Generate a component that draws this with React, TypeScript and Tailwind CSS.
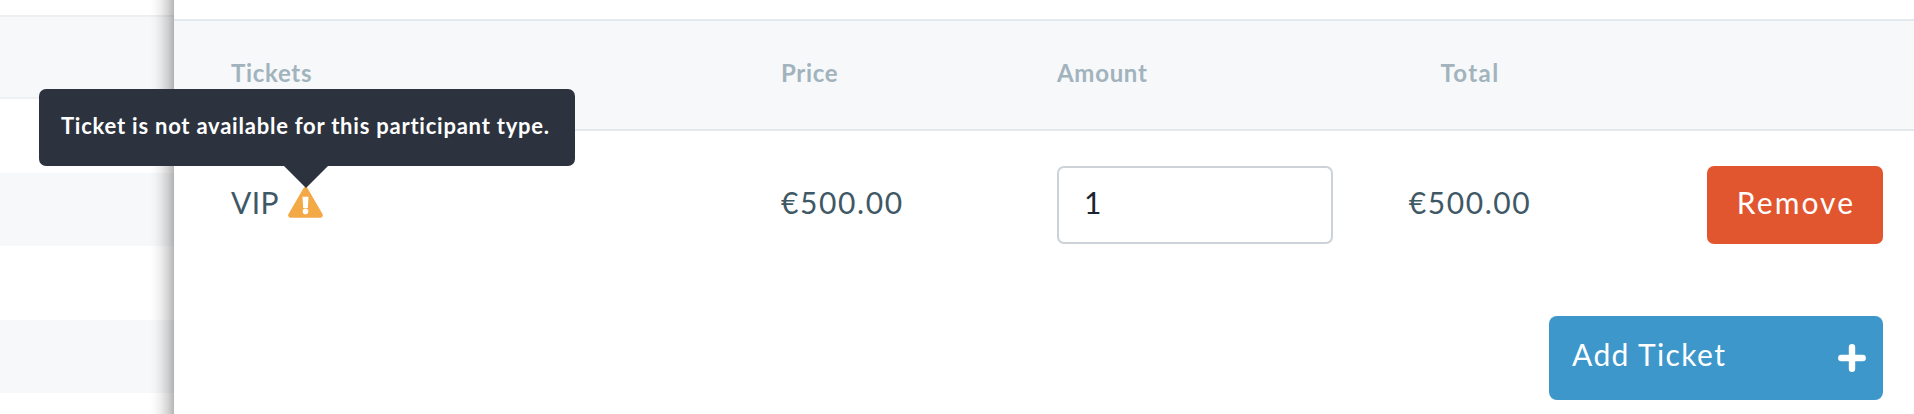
import { useState } from 'react';

function WarningIcon() {
  return (
    <svg viewBox="0 0 35 31" className="w-[35px] h-[31px]" aria-hidden="true">
      <path
        d="M15.3 1.4a2.5 2.5 0 0 1 4.4 0l14.8 25.7a2.4 2.4 0 0 1-2.1 3.6H2.6a2.4 2.4 0 0 1-2.1-3.6z"
        fill="#f4a947"
      />
      <path d="M14.5 9.8h6l-.7 11.3h-4.6z" fill="#fff" />
      <circle cx="17.5" cy="24.4" r="2.8" fill="#fff" />
    </svg>
  );
}

function PlusIcon() {
  return (
    <svg viewBox="0 0 28 28" className="w-7 h-7" aria-hidden="true">
      <path d="M14 3.3v21.4M3.3 14h21.4" stroke="#fff" strokeWidth="6.4" strokeLinecap="round" />
    </svg>
  );
}

function Tooltip({ text }: { text: string }) {
  return (
    <div
      role="tooltip"
      className="absolute left-[-249px] bottom-[30px] w-[536px] h-[77px] mb-[22px] pl-[22px] bg-[#2d333e] rounded-[7px] text-white text-[22px] leading-[74px] font-bold tracking-[0.77px] whitespace-nowrap"
    >
      {text}
      <svg viewBox="0 0 46 23" className="absolute left-[244px] top-[76px] w-[46px] h-[23px]" aria-hidden="true">
        <path d="M0 0h46L23 23z" fill="#2d333e" />
      </svg>
    </div>
  );
}

export default function App() {
  const [amount, setAmount] = useState('1');

  return (
    <div className="flex w-[1914px] h-[414px] overflow-hidden bg-white font-['Lato',sans-serif]">
      <div className="relative w-[174px] shrink-0">
        <div className="h-[15px]" />
        <div className="h-[84px] bg-[#f7f8fa] border-t-2 border-b-2 border-t-[#eeeff1] border-b-[#edf1f4]" />
        <div className="h-[74px]" />
        <div className="h-[73px] bg-[#f7f8fa]" />
        <div className="h-[74px]" />
        <div className="h-[73px] bg-[#f7f8fa]" />
        <div className="absolute inset-y-0 right-0 w-6 bg-[linear-gradient(to_left,rgba(0,0,0,0.29),rgba(0,0,0,0.17)_25%,rgba(0,0,0,0.07)_55%,rgba(0,0,0,0.02)_80%,transparent)]" />
      </div>

      <div className="w-[1740px] shrink-0 pt-[19px]">
        <div className="flex h-[112px] pl-[57px] bg-[#f7f8fa] border-y-2 border-[#e3e9ed] text-[#a1b3bd] text-2xl leading-[104px] font-bold tracking-[0.7px]">
          <div className="w-[550px]">Tickets</div>
          <div className="w-[276px]">Price</div>
          <div className="w-[276px]">Amount</div>
          <div className="w-[274px] text-center tracking-[1.4px]">Total</div>
        </div>

        <div className="flex h-[113px] pl-[57px] pt-[35px] text-[#3f5866] text-[30px] leading-[72px]">
          <div className="flex w-[550px]">
            <span className="w-[57px] tracking-[0.4px]">VIP</span>
            <span className="relative mt-[21px] h-[31px]">
              <WarningIcon />
              <Tooltip text="Ticket is not available for this participant type." />
            </span>
          </div>
          <div className="w-[276px] tracking-[1.6px]">€500.00</div>
          <input
            type="text"
            aria-label="Amount"
            value={amount}
            onChange={(e) => setAmount(e.target.value)}
            className="w-[276px] h-[78px] pl-[25px] pb-1.5 border-2 border-[#ccd2d8] rounded-[7px] text-[#1d2430] outline-none"
          />
          <div className="w-[274px] text-center tracking-[1.6px]">€500.00</div>
          <button className="ml-[100px] w-[176px] h-[78px] pl-0.5 pb-1.5 bg-[#e2562f] rounded-[7px] text-white tracking-[2.1px]">
            Remove
          </button>
        </div>

        <div className="flex justify-end mt-[72px] pr-[31px]">
          <button className="flex items-center justify-between w-[334px] h-[84px] pl-[23px] pr-[17px] bg-[#3d97ca] rounded-lg text-white text-[30px] leading-[76px] tracking-[1.4px]">
            <span className="pb-2">Add Ticket</span>
            <PlusIcon />
          </button>
        </div>
      </div>
    </div>
  );
}
